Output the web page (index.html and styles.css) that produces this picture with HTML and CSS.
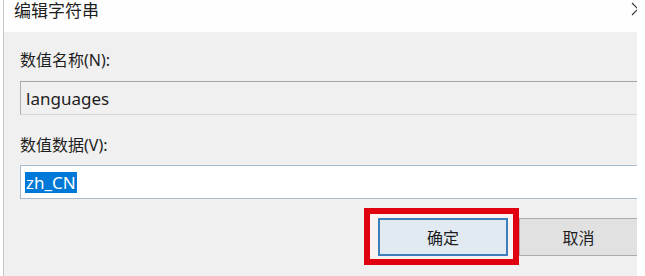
FILE: index.html
```html
<!DOCTYPE html>
<html lang="zh-CN">
<head>
  <meta charset="UTF-8" />
  <title>编辑字符串</title>
  <link rel="stylesheet" href="styles.css">
</head>
<body>
  <div class="screen">
    <div class="dialog">
      <div class="titlebar">
        <span class="title">编辑字符串</span>
        <svg class="close" viewBox="0 0 14 14" width="14" height="14">
          <path d="M1 1 L13 13 M13 1 L1 13" stroke="#333" stroke-width="1.2" fill="none" />
        </svg>
      </div>

      <div class="content">
        <label class="field-label">数值名称(N):</label>
        <div class="field field-readonly">languages</div>

        <label class="field-label second">数值数据(V):</label>
        <div class="field field-edit"><span class="selected">zh_CN</span></div>

        <div class="actions">
          <div class="highlight">
            <button class="btn btn-default">确定</button>
          </div>
          <button class="btn btn-cancel">取消</button>
        </div>
      </div>
    </div>
  </div>
</body>
</html>
```

FILE: styles.css
```css
html, body {
  margin: 0;
  height: 276px;
  overflow: hidden;
  background: #fff;
  font-family: "Noto Sans", "Noto Sans CJK SC", sans-serif;
  color: #1e1e1e;
}
.screen {
  display: flex;
  height: 276px;
  padding-left: 3px;
}
.dialog {
  width: 633px;
  border-left: 1px solid #c6c6c6;
  background: #f0f0f0;
  overflow: hidden;
  display: flex;
  flex-direction: column;
}
.titlebar {
  height: 32px;
  flex-shrink: 0;
  background: #fefefe;
  display: flex;
  justify-content: space-between;
  align-items: flex-start;
  padding-left: 10px;
}
.title {
  font-size: 17px;
  line-height: 24px;
  margin-top: -1px;
}
.close {
  margin-top: 2px;
  margin-right: -8px;
}
.content {
  padding: 18px 0 0 16px;
}
.field-label {
  display: block;
  font-size: 16px;
  line-height: 20px;
}
.field-label.second {
  margin-top: 20px;
}
.field {
  box-sizing: border-box;
  height: 34px;
  margin-top: 11px;
  padding-left: 5px;
  display: flex;
  align-items: center;
  font-size: 17px;
  border: 1px solid #adadad;
  border-right: none;
}
.field-readonly {
  background: #f0f0f0;
  border-top-color: #a3a3a3;
  border-bottom-color: #d6d6d6;
}
.field-edit {
  margin-top: 10px;
  padding-left: 4px;
  background: #fff;
  border-color: #a9bccf;
}
.selected {
  background: #0078d7;
  color: #fff;
  padding: 0 1px;
  line-height: 21px;
}
.actions {
  margin-top: 9px;
  display: flex;
  justify-content: flex-end;
  align-items: flex-start;
}
.highlight {
  border: 6px solid #e0000f;
  padding: 4px 5px 3px 8px;
  background: #f8f2f2;
}
.btn {
  box-sizing: border-box;
  height: 38px;
  font-family: "Noto Sans", "Noto Sans CJK SC", sans-serif;
  font-size: 16px;
  color: #1e1e1e;
  padding: 0;
}
.btn-default {
  display: block;
  width: 130px;
  border: 2px solid #3d7fba;
  background: #e1e9f1;
}
.btn-cancel {
  width: 118px;
  margin-top: 10px;
  border: 1px solid #adadad;
  border-right: none;
  background: #e1e1e1;
}
```
